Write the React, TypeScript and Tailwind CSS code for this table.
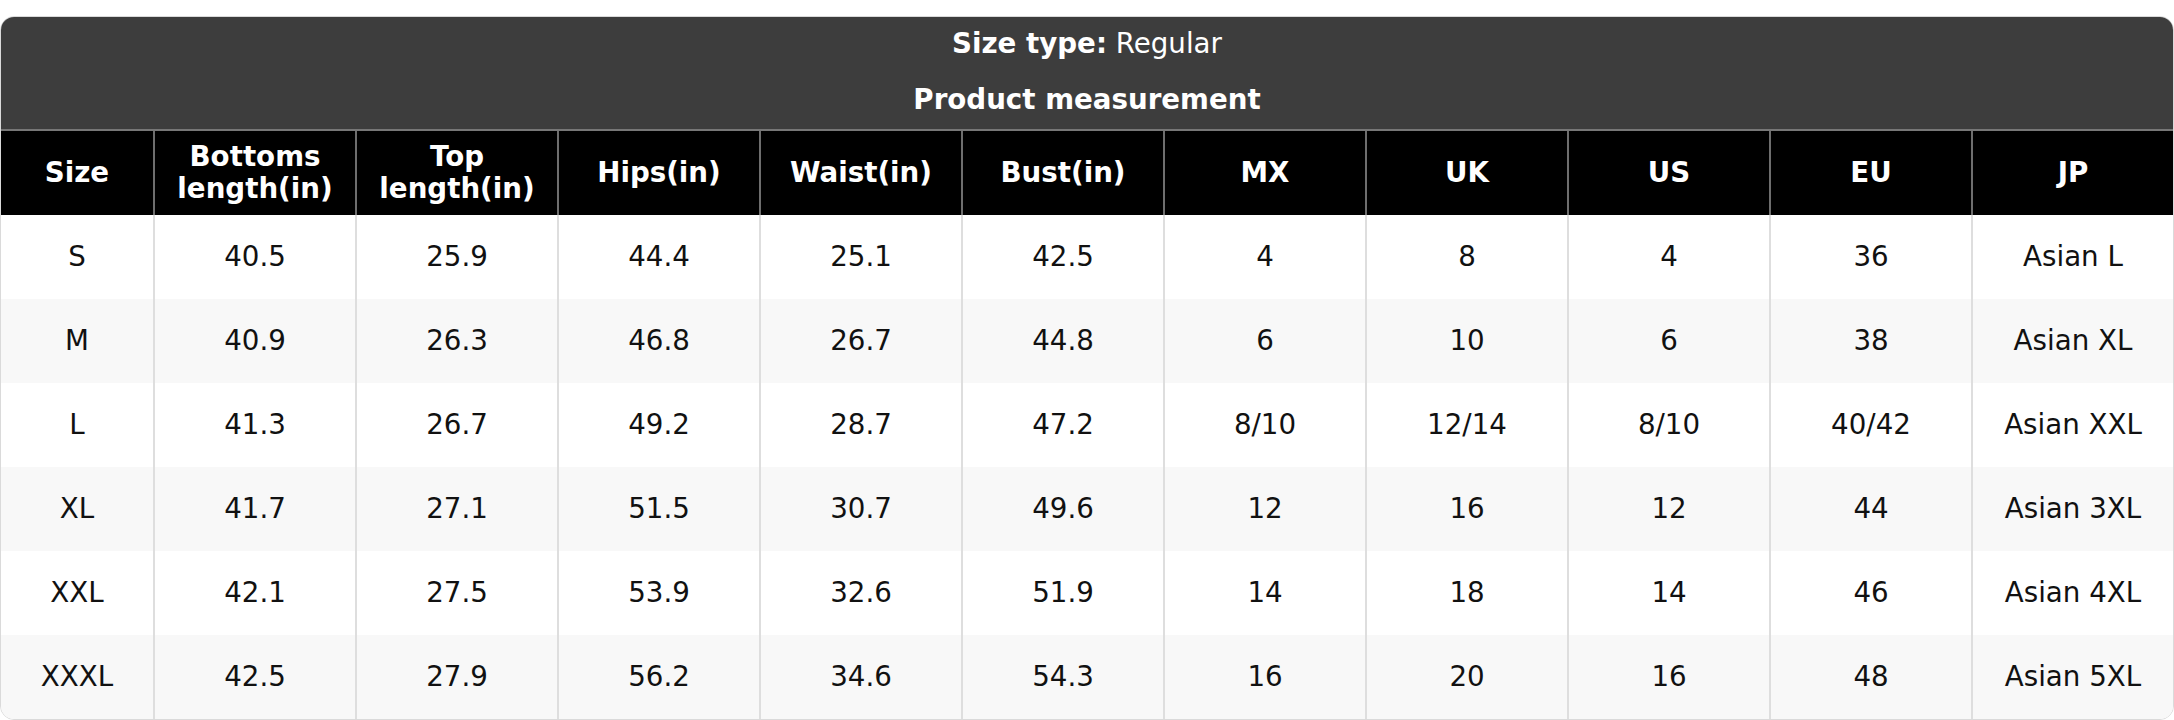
const headers = [
  'Size',
  'Bottoms length(in)',
  'Top length(in)',
  'Hips(in)',
  'Waist(in)',
  'Bust(in)',
  'MX',
  'UK',
  'US',
  'EU',
  'JP',
]

const rows = [
  ['S', '40.5', '25.9', '44.4', '25.1', '42.5', '4', '8', '4', '36', 'Asian L'],
  ['M', '40.9', '26.3', '46.8', '26.7', '44.8', '6', '10', '6', '38', 'Asian XL'],
  ['L', '41.3', '26.7', '49.2', '28.7', '47.2', '8/10', '12/14', '8/10', '40/42', 'Asian XXL'],
  ['XL', '41.7', '27.1', '51.5', '30.7', '49.6', '12', '16', '12', '44', 'Asian 3XL'],
  ['XXL', '42.1', '27.5', '53.9', '32.6', '51.9', '14', '18', '14', '46', 'Asian 4XL'],
  ['XXXL', '42.5', '27.9', '56.2', '34.6', '54.3', '16', '20', '16', '48', 'Asian 5XL'],
]

export default function App() {
  return (
    <div
      className="bg-white pt-4 text-[27.7px]"
      style={{ fontFamily: '"DejaVu Sans", Verdana, sans-serif' }}
    >
      <div className="overflow-hidden rounded-[14px] border border-[#dadada]">
        <div className="bg-[#3d3d3d] pt-[11px] pb-[13px] text-center text-white">
          <p className="leading-[32px]">
            <span className="font-bold">Size type:</span> Regular
          </p>
          <p className="mt-[24px] font-bold leading-[32px]">Product measurement</p>
        </div>

        <div className="grid grid-cols-[152px_repeat(10,1fr)] border-t-2 border-[#777777] bg-black font-bold text-white">
          {headers.map((h, i) => (
            <div
              key={h}
              className={
                'flex h-[84px] items-center justify-center px-2 text-center leading-[32px] ' +
                (i > 0 ? 'border-l-2 border-[#6e6e6e]' : '')
              }
            >
              {h}
            </div>
          ))}
        </div>

        {rows.map((row, r) => (
          <div
            key={row[0]}
            className={
              'grid grid-cols-[152px_repeat(10,1fr)] text-[#111111] ' +
              (r % 2 === 1 ? 'bg-[#f8f8f8]' : 'bg-white')
            }
          >
            {row.map((cell, i) => (
              <div
                key={i}
                className={
                  'flex h-[84px] items-center justify-center text-center ' +
                  (i > 0 ? 'border-l-2 border-[#dedede]' : '')
                }
              >
                {cell}
              </div>
            ))}
          </div>
        ))}
      </div>
    </div>
  )
}
